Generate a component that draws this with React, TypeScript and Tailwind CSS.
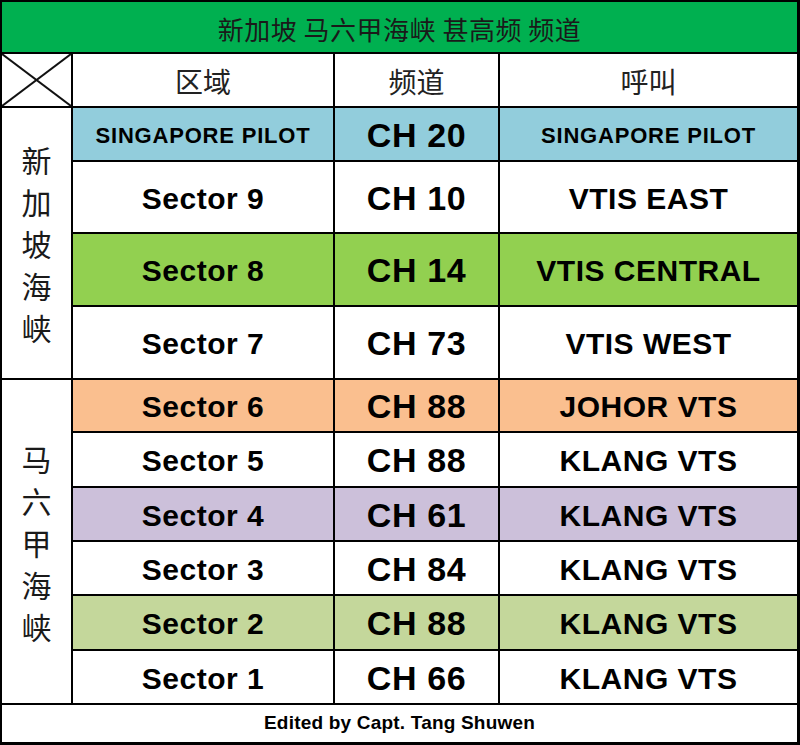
import React from 'react';

// 频道表：新加坡 / 马六甲海峡 VHF
type Row = { zone: string; ch: string; call: string; bg: string; small?: boolean };

const singaporeRows: Row[] = [
  { zone: 'SINGAPORE PILOT', ch: 'CH 20', call: 'SINGAPORE PILOT', bg: 'bg-[#92cddc]', small: true },
  { zone: 'Sector 9', ch: 'CH 10', call: 'VTIS EAST', bg: 'bg-white' },
  { zone: 'Sector 8', ch: 'CH 14', call: 'VTIS CENTRAL', bg: 'bg-[#92d050]' },
  { zone: 'Sector 7', ch: 'CH 73', call: 'VTIS WEST', bg: 'bg-white' },
];

const malaccaRows: Row[] = [
  { zone: 'Sector 6', ch: 'CH 88', call: 'JOHOR VTS', bg: 'bg-[#fabf8f]' },
  { zone: 'Sector 5', ch: 'CH 88', call: 'KLANG VTS', bg: 'bg-white' },
  { zone: 'Sector 4', ch: 'CH 61', call: 'KLANG VTS', bg: 'bg-[#ccc0da]' },
  { zone: 'Sector 3', ch: 'CH 84', call: 'KLANG VTS', bg: 'bg-white' },
  { zone: 'Sector 2', ch: 'CH 88', call: 'KLANG VTS', bg: 'bg-[#c4d79b]' },
  { zone: 'Sector 1', ch: 'CH 66', call: 'KLANG VTS', bg: 'bg-white' },
];

const cjk = "font-['Noto_Sans_CJK_SC',sans-serif]";
const latin = "font-['Liberation_Sans',Arial,sans-serif]";

const VerticalLabel = ({ text, span }: { text: string; span: string }) => (
  <div className={`${span} bg-white flex flex-col items-center justify-center text-[30px] leading-[42px] text-[#1a1a1a] ${cjk}`}>
    {text.split('').map((c, i) => (
      <span key={i}>{c}</span>
    ))}
  </div>
);

const DataRow = ({ row }: { row: Row }) => {
  const side = row.small ? 'text-[22px] tracking-[0.8px]' : 'text-[30px] tracking-[0.5px]';
  return (
    <>
      <div className={`${row.bg} flex items-center justify-center pt-[2px] font-bold text-black ${latin} ${side}`}>
        {row.zone}
      </div>
      <div className={`${row.bg} flex items-center justify-center pt-[2px] font-bold text-black text-[34px] tracking-[0.6px] ${latin}`}>
        {row.ch}
      </div>
      <div className={`${row.bg} flex items-center justify-center pt-[2px] font-bold text-black ${latin} ${side}`}>
        {row.call}
      </div>
    </>
  );
};

export default function App() {
  return (
    <div className="w-[800px] h-[745px] bg-black grid grid-cols-[69px_260px_163px_297px] grid-rows-[50px_52px_52px_70px_71px_71px_51px_53px_52px_52px_53px_52px_37px] gap-[2px] pt-[2px] pl-[2px] pr-[3px] pb-[3px]">
      {/* 标题 */}
      <div className={`col-span-4 bg-[#00b050] flex items-center justify-center pt-[2px] text-[26px] tracking-[0.5px] text-[#1a1a1a] ${cjk}`}>
        新加坡 马六甲海峡 甚高频 频道
      </div>

      {/* 表头 */}
      <div className="bg-white relative">
        <svg className="absolute inset-0 w-full h-full" viewBox="0 0 69 52" preserveAspectRatio="none">
          <line x1="0" y1="0" x2="69" y2="52" stroke="#111" strokeWidth="2" />
          <line x1="69" y1="0" x2="0" y2="52" stroke="#111" strokeWidth="2" />
        </svg>
      </div>
      <div className={`bg-white flex items-center justify-center pt-[2px] text-[28px] text-[#222] ${cjk}`}>区域</div>
      <div className={`bg-white flex items-center justify-center pt-[2px] text-[28px] text-[#222] ${cjk}`}>频道</div>
      <div className={`bg-white flex items-center justify-center pt-[2px] text-[28px] text-[#222] ${cjk}`}>呼叫</div>

      {/* 新加坡海峡 */}
      <VerticalLabel text="新加坡海峡" span="row-span-4" />
      {singaporeRows.map((r) => (
        <DataRow key={r.zone + r.ch} row={r} />
      ))}

      {/* 马六甲海峡 */}
      <VerticalLabel text="马六甲海峡" span="row-span-6" />
      {malaccaRows.map((r) => (
        <DataRow key={r.zone} row={r} />
      ))}

      {/* 页脚 */}
      <div className={`col-span-4 bg-white flex items-center justify-center text-[19px] tracking-[0.2px] font-bold text-black ${latin}`}>
        Edited by Capt. Tang Shuwen
      </div>
    </div>
  );
}
